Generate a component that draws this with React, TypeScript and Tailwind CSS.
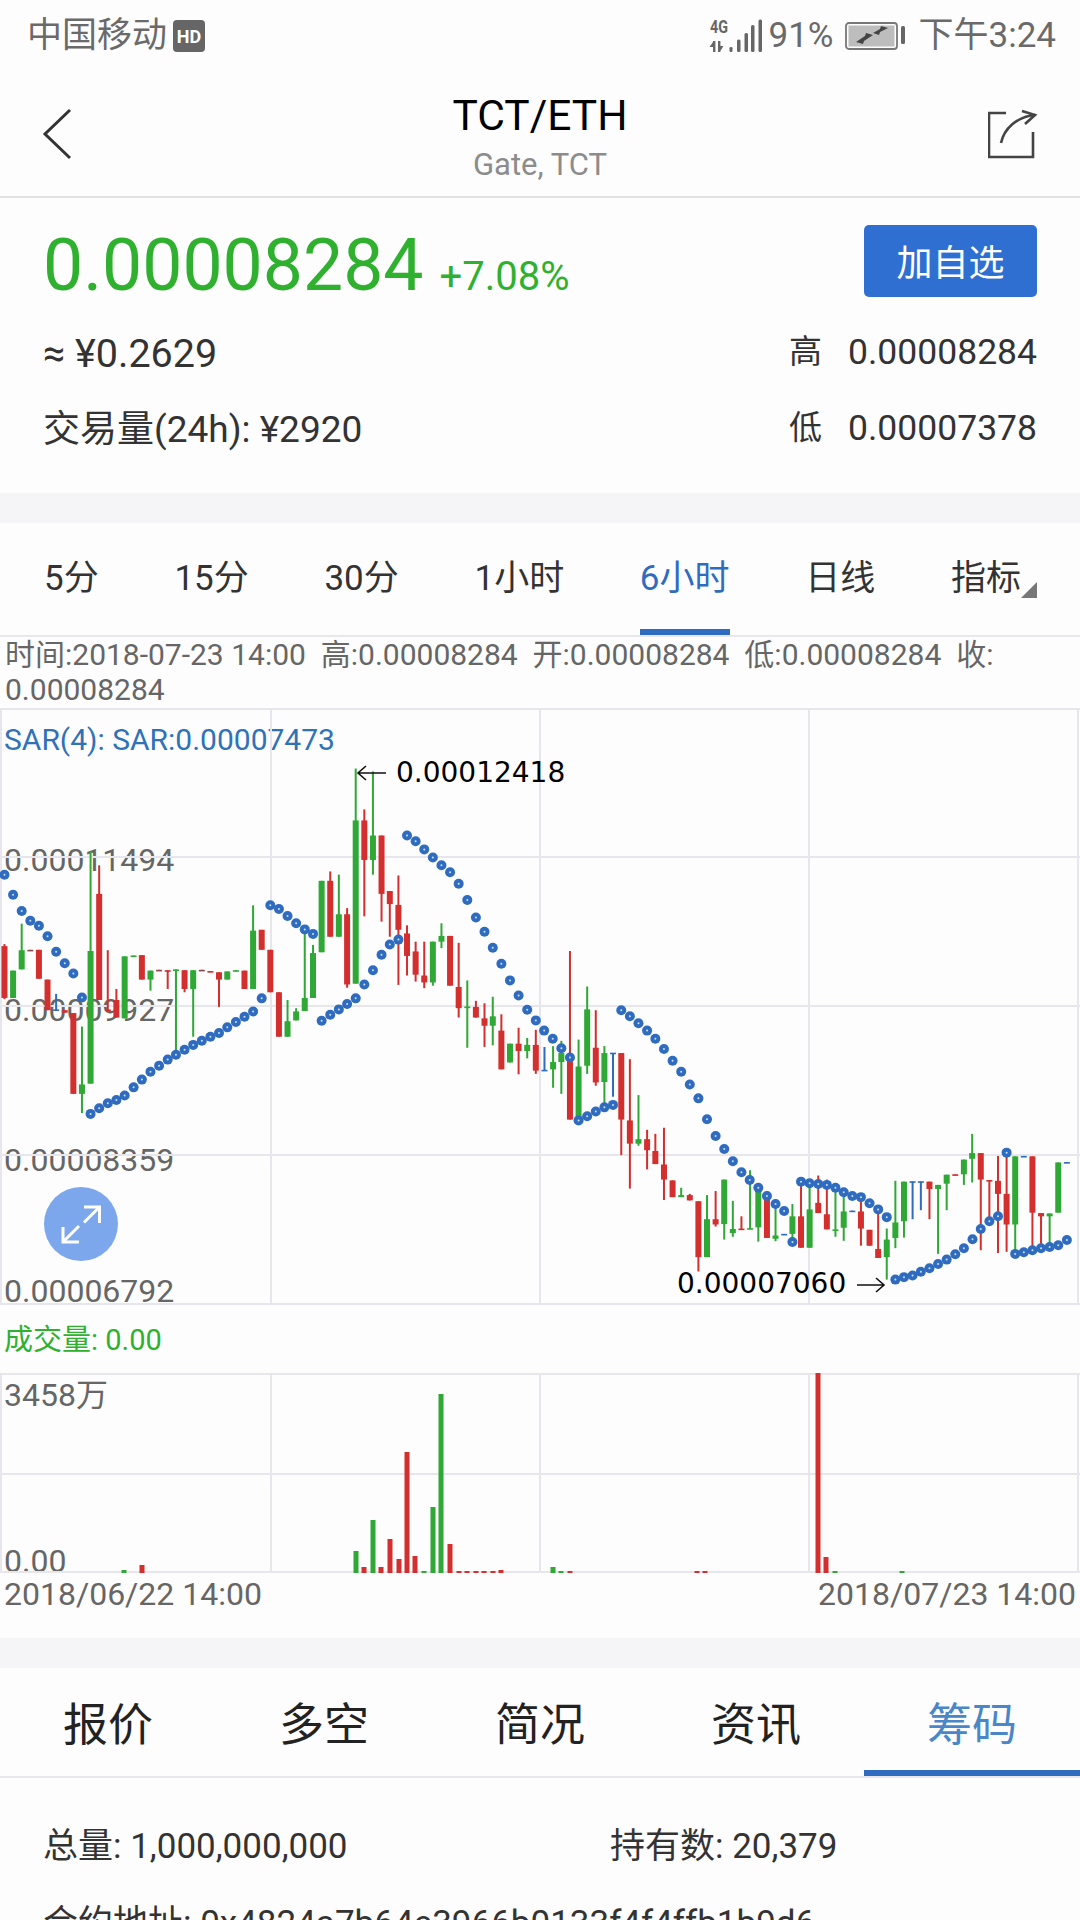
type Candle = [number, number, number, number, number, string];

const green = "#2fa836";
const red = "#d32f2f";
const blue = "#2f6cbf";
const grid = "#e6e6ec";

// [x, wick top, wick bottom, body top, body bottom, colour], read off the 2 halves of the chart
const left: Candle[] = [
  [13, 598, 733, 603, 730, "r"], [38, 663, 730, 663, 730, "g"], [63, 548, 660, 613, 660, "g"], [88, 612, 614, 612, 614, "d"],
  [113, 612, 683, 612, 683, "r"], [138, 685, 760, 685, 760, "r"], [163, 720, 760, 758, 760, "b"], [188, 760, 766, 760, 766, "r"],
  [213, 767, 965, 767, 965, "r"], [238, 800, 1012, 942, 965, "g"], [263, 370, 940, 615, 940, "g"], [288, 405, 735, 475, 735, "r"],
  [313, 613, 760, 758, 760, "r"], [338, 708, 778, 735, 778, "r"], [362, 628, 780, 628, 780, "g"], [388, 626, 628, 626, 628, "g"],
  [412, 625, 685, 625, 685, "r"], [437, 663, 712, 663, 685, "g"], [462, 661, 663, 661, 663, "d"], [487, 662, 708, 662, 664, "r"],
  [511, 660, 860, 660, 662, "g"], [536, 662, 716, 662, 708, "r"], [561, 662, 825, 662, 708, "g"], [586, 661, 663, 661, 663, "d"],
  [611, 664, 667, 664, 667, "r"], [636, 667, 752, 667, 685, "r"], [660, 665, 685, 665, 685, "g"], [685, 662, 664, 662, 664, "g"],
  [710, 663, 708, 663, 708, "r"], [735, 503, 708, 565, 708, "g"], [760, 563, 612, 563, 612, "r"], [785, 612, 716, 612, 716, "r"],
  [810, 716, 825, 716, 825, "r"], [835, 735, 825, 787, 825, "g"], [860, 755, 785, 763, 785, "g"], [885, 570, 762, 730, 762, "g"],
  [909, 600, 730, 620, 730, "g"], [934, 443, 618, 443, 618, "g"], [959, 420, 580, 443, 580, "r"], [984, 428, 580, 525, 580, "g"],
  [1008, 510, 705, 525, 697, "r"], [1033, 168, 695, 295, 695, "g"], [1058, 268, 530, 295, 392, "r"], [1083, 175, 428, 332, 392, "g"],
  [1108, 332, 543, 332, 475, "r"], [1132, 468, 580, 468, 500, "r"], [1157, 430, 698, 502, 563, "r"], [1182, 552, 675, 572, 627, "r"],
  [1207, 592, 690, 616, 673, "r"], [1232, 592, 706, 675, 692, "r"], [1257, 592, 700, 592, 692, "g"], [1282, 547, 608, 578, 592, "g"],
  [1307, 578, 700, 578, 700, "r"], [1332, 595, 778, 703, 755, "r"], [1357, 687, 852, 751, 754, "g"], [1382, 737, 778, 752, 778, "r"],
  [1407, 743, 850, 780, 798, "r"], [1431, 727, 846, 775, 798, "g"], [1456, 770, 905, 810, 905, "r"], [1481, 842, 888, 842, 888, "g"],
  [1506, 803, 917, 842, 860, "r"], [1531, 828, 878, 845, 860, "g"], [1556, 808, 916, 845, 908, "r"],
];

const right: Candle[] = [
  [13, 850, 908, 906, 908, "b"], [38, 848, 950, 887, 905, "g"], [62, 835, 965, 865, 887, "g"], [87, 615, 1028, 885, 1028, "r"],
  [112, 832, 1028, 898, 1028, "g"], [137, 702, 916, 758, 896, "g"], [162, 760, 945, 852, 937, "r"], [187, 848, 990, 865, 936, "g"],
  [212, 865, 972, 864, 866, "b"], [236, 865, 1115, 865, 1028, "r"], [261, 880, 1197, 1030, 1087, "r"], [286, 968, 1092, 1076, 1087, "g"],
  [311, 1053, 1150, 1076, 1103, "r"], [335, 1063, 1137, 1105, 1137, "r"], [360, 1048, 1225, 1138, 1175, "r"], [385, 1177, 1218, 1177, 1218, "r"],
  [410, 1195, 1218, 1213, 1218, "g"], [435, 1210, 1226, 1213, 1226, "r"], [460, 1228, 1400, 1228, 1365, "r"], [485, 1213, 1365, 1272, 1365, "g"],
  [510, 1203, 1290, 1272, 1285, "r"], [535, 1175, 1322, 1175, 1284, "g"], [560, 1227, 1315, 1296, 1306, "g"], [585, 1265, 1297, 1295, 1297, "r"],
  [610, 1152, 1296, 1294, 1296, "g"], [634, 1190, 1327, 1190, 1292, "g"], [659, 1205, 1318, 1205, 1318, "r"], [684, 1240, 1326, 1312, 1320, "g"],
  [709, 1308, 1310, 1308, 1310, "b"], [733, 1235, 1320, 1265, 1308, "g"], [758, 1180, 1342, 1265, 1342, "r"], [783, 1185, 1342, 1248, 1342, "g"],
  [808, 1165, 1257, 1232, 1257, "r"], [833, 1175, 1297, 1260, 1297, "r"], [858, 1185, 1315, 1297, 1299, "g"], [882, 1210, 1325, 1253, 1293, "g"],
  [907, 1251, 1253, 1251, 1253, "b"], [932, 1225, 1337, 1253, 1295, "r"], [957, 1298, 1337, 1298, 1337, "r"], [982, 1250, 1367, 1345, 1367, "r"],
  [1007, 1295, 1420, 1322, 1365, "g"], [1032, 1178, 1343, 1280, 1318, "g"], [1057, 1180, 1317, 1180, 1277, "g"], [1082, 1180, 1272, 1179, 1181, "b"],
  [1106, 1180, 1250, 1179, 1181, "b"], [1131, 1180, 1272, 1180, 1198, "r"], [1156, 1188, 1357, 1188, 1198, "g"], [1181, 1163, 1250, 1163, 1185, "g"],
  [1206, 1162, 1164, 1162, 1164, "r"], [1231, 1126, 1188, 1126, 1162, "g"], [1255, 1063, 1182, 1110, 1124, "g"], [1280, 1110, 1348, 1110, 1175, "r"],
  [1305, 1177, 1270, 1176, 1178, "r"], [1330, 1117, 1355, 1178, 1210, "r"], [1355, 1100, 1352, 1210, 1285, "r"], [1380, 1118, 1350, 1118, 1285, "g"],
  [1405, 1117, 1119, 1117, 1119, "b"], [1430, 1118, 1340, 1118, 1256, "r"], [1455, 1258, 1335, 1257, 1265, "r"], [1480, 1258, 1335, 1258, 1265, "g"],
  [1505, 1133, 1256, 1133, 1256, "g"], [1530, 1132, 1134, 1132, 1134, "b"],
];

const leftDots = [
  [13, 428], [38, 477], [63, 517], [88, 541], [113, 553], [138, 579], [163, 617], [188, 645], [213, 670], [238, 729],
  [263, 1014], [288, 1000], [313, 988], [338, 980], [362, 969], [388, 949], [412, 930], [437, 911], [462, 896], [487, 881],
  [511, 869], [536, 857], [561, 845], [586, 835], [611, 825], [636, 816], [660, 802], [685, 789], [710, 776], [735, 763], [760, 731],
  [785, 503], [810, 512], [835, 529], [860, 547], [885, 562], [909, 573],
  [934, 786], [959, 771], [984, 758], [1008, 745], [1033, 731], [1058, 697], [1083, 662], [1108, 624], [1132, 599], [1157, 587],
  [1182, 332], [1207, 346], [1232, 366], [1257, 386], [1282, 405], [1307, 422], [1332, 450], [1357, 490], [1382, 533], [1407, 568],
  [1431, 607], [1456, 646], [1481, 687], [1506, 724], [1531, 759], [1556, 785],
];

const rightDots = [
  [12, 810], [37, 830], [62, 853], [87, 876],
  [112, 1030], [137, 1020], [162, 1008], [187, 998], [212, 992],
  [236, 760], [261, 775], [286, 792], [311, 810], [335, 830], [360, 855], [385, 884], [410, 911], [435, 942], [460, 976],
  [485, 1027], [510, 1068], [535, 1100], [560, 1130], [585, 1157], [609, 1176], [634, 1195], [659, 1215], [684, 1235], [709, 1252], [733, 1328],
  [758, 1180], [783, 1184], [808, 1186], [833, 1188], [858, 1195], [882, 1206], [907, 1215], [932, 1218], [957, 1233], [982, 1248], [1007, 1267],
  [1032, 1420], [1057, 1414], [1082, 1410], [1106, 1401], [1131, 1392], [1156, 1382], [1181, 1371], [1206, 1358], [1231, 1343], [1256, 1321],
  [1280, 1296], [1305, 1277], [1330, 1265], [1355, 1109],
  [1380, 1357], [1405, 1353], [1430, 1348], [1455, 1343], [1480, 1340], [1505, 1336], [1530, 1323],
];

// x in page pixels, top of bar inside the 200px high chart
const volumes: [number, number, string][] = [
  [124, 197, "g"], [142, 192, "r"], [356, 178, "g"], [364, 194, "r"], [373, 147, "g"], [381, 194, "r"], [390, 166, "r"], [399, 186, "r"],
  [407, 79, "r"], [415, 183, "r"], [424, 198, "g"], [433, 134, "g"], [441, 21, "g"], [450, 171, "r"], [459, 198, "r"], [467, 198, "r"],
  [476, 198, "r"], [484, 198, "r"], [493, 198, "r"], [501, 197, "r"], [553, 194, "g"], [561, 198, "g"], [570, 198, "r"], [697, 198, "r"],
  [705, 198, "r"], [818, 0, "r"], [826, 184, "r"], [835, 198, "g"], [902, 198, "g"],
];

const colour = (c: string) => (c === "g" ? green : c === "r" ? red : c === "b" ? blue : "#8a4a4a");

function Candles({ data, base }: { data: Candle[]; base: number }) {
  return (
    <>
      {data.map(([zx, wt, wb, bt, bb, c]) => {
        const x = base + zx / 2.904;
        const y = (v: number) => 700 + v / 2.45 - 708;
        return (
          <g key={zx} fill={colour(c)}>
            <rect x={x - 1} y={y(wt)} width={2} height={y(wb) - y(wt)} />
            <rect x={x - 3} y={y(bt)} width={6} height={Math.max(y(bb) - y(bt), 1.6)} />
          </g>
        );
      })}
    </>
  );
}

function Dots({ data, base }: { data: number[][]; base: number }) {
  return (
    <>
      {data.map(([zx, zy]) => {
        const x = base + zx / 2.904;
        const y = 700 + zy / 2.45 - 708;
        return (
          <g key={zx}>
            <circle cx={x} cy={y} r={5} fill={blue} />
            <circle cx={x} cy={y} r={1} fill="#cfe0f5" />
          </g>
        );
      })}
    </>
  );
}

function Signal() {
  return (
    <svg width="56" height="36" viewBox="0 0 56 36" fill="#666">
      <text x="1" y="15" fontSize="18" fontWeight="700" fontFamily="Roboto, sans-serif" textLength="18" lengthAdjust="spacingAndGlyphs">4G</text>
      <path d="M4 23h2.4v11H4zM0.5 29L4 24v5zM9 23h2.4v11H9zM11.4 33l3-5h-3z" />
      <rect x="20.5" y="29" width="3" height="5" rx="1.2" />
      <rect x="28" y="21.5" width="3.5" height="12.5" rx="1.5" />
      <rect x="35.5" y="15" width="3.5" height="19" rx="1.5" />
      <rect x="42" y="7" width="3.5" height="27" rx="1.5" />
      <rect x="49.5" y="1.5" width="3.5" height="32.5" rx="1.5" />
    </svg>
  );
}

function Battery() {
  return (
    <svg width="60" height="28" viewBox="0 0 60 28">
      <rect x="1" y="1" width="51" height="26" rx="3" fill="none" stroke="#777" strokeWidth="1.8" />
      <rect x="3.5" y="3.5" width="46" height="21" fill="#bdbdbd" />
      <rect x="56" y="4" width="4" height="18" rx="1.5" fill="#666" />
      <path d="M11 20l9-6 1-3 7 2-9 6-1 3zM28 11l7-4 1-3 7 2-8 4-1 3z" fill="#444" />
    </svg>
  );
}

export default function App() {
  const tabs = ["5分", "15分", "30分", "1小时", "6小时", "日线"];
  const bottomTabs = ["报价", "多空", "简况", "资讯", "筹码"];

  return (
    <div className="h-[1920px] overflow-hidden bg-[#fdfdfd] font-[Roboto,'Noto_Sans_CJK_SC',sans-serif] text-[#333]">
      {/* Status bar */}
      <div className="flex h-[72px] items-center justify-between pl-[27px] pr-[24px] text-[35px] text-[#6a6a6a]">
        <div className="flex items-center gap-[6px]">
          <span>中国移动</span>
          <span className="flex h-[32px] w-[32px] items-center justify-center rounded-[4px] bg-[#666] text-[18px] font-bold text-white">HD</span>
        </div>
        <div className="flex items-center">
          <Signal />
          <span className="ml-[4px]">91%</span>
          <span className="ml-[11px]"><Battery /></span>
          <span className="ml-[14px]">下午3:24</span>
        </div>
      </div>

      {/* Title bar */}
      <div className="flex h-[126px] items-center justify-between border-b-2 border-[#e2e2e2] pl-[42px] pr-[42px]">
        <div className="w-[50px]">
          <svg width="30" height="52" viewBox="0 0 30 52" fill="none" stroke="#333" strokeWidth="3">
            <path d="M28 2L3 26l25 24" />
          </svg>
        </div>
        <div className="pt-[6px] text-center">
          <div className="text-[42.5px] leading-[50px] text-black">TCT/ETH</div>
          <div className="mt-[6px] text-[31px] leading-[36px] text-[#8c8c8c]">Gate, TCT</div>
        </div>
        <svg width="50" height="50" viewBox="0 0 50 50" fill="none" stroke="#444" strokeWidth="2.6">
          <path d="M18 4H1V48H45V23" />
          <path d="M13 34C16 20 28 8 47 6" />
          <path d="M34 2L47 6L37 15" />
        </svg>
      </div>

      {/* Price block */}
      <div className="flex h-[295px] justify-between pl-[43px] pr-[43px]">
        <div>
          <div className="mt-[28px] flex items-baseline gap-[16px] leading-[80px] text-[#2fb12f]">
            <span className="text-[71.5px]">0.00008284</span>
            <span className="text-[40px]">+7.08%</span>
          </div>
          <div className="mt-[12px] text-[39.5px] leading-[50px]">≈ ¥0.2629</div>
          <div className="mt-[26px] text-[37px] leading-[50px]">交易量(24h): ¥2920</div>
        </div>
        <div className="flex flex-col items-end">
          <button className="mt-[27px] flex h-[72px] w-[173px] items-center justify-center rounded-[5px] bg-[#2f6fd2] pt-[5px] text-[36px] text-white">加自选</button>
          <div className="mt-[30px] flex items-center gap-[26px] text-[35.5px] leading-[50px]">
            <span className="text-[33px]">高</span>
            <span>0.00008284</span>
          </div>
          <div className="mt-[26px] flex items-center gap-[26px] text-[35.5px] leading-[50px]">
            <span className="text-[33px]">低</span>
            <span>0.00007378</span>
          </div>
        </div>
      </div>

      <div className="h-[30px] bg-[#f5f5f7]" />

      {/* Interval tabs */}
      <div className="flex h-[114px] justify-between border-b-2 border-[#e8e8ec] pl-[44px] pr-[43px] text-[35px]">
        {tabs.map((t) => (
          <div
            key={t}
            className={t === "6小时" ? "flex items-center border-b-[6px] border-[#2f6cbf] pt-[6px] text-[#2f6cbf]" : "flex items-center"}
          >
            {t}
          </div>
        ))}
        <div className="flex items-center">
          <span>指标</span>
          <span className="mt-[22px] h-0 w-0 border-b-[16px] border-l-[16px] border-b-[#777] border-l-transparent" />
        </div>
      </div>

      {/* Crosshair values */}
      <div className="h-[71px] px-[5px] text-[30px] leading-[35px] text-[#666]">
        时间:2018-07-23 14:00&nbsp; 高:0.00008284&nbsp; 开:0.00008284&nbsp; 低:0.00008284&nbsp; 收: 0.00008284
      </div>

      {/* Candlestick chart */}
      <div className="relative h-[597px]">
        <div className="absolute left-[4px] top-[14px] text-[30px] leading-[36px] text-[#2f72b8]">SAR(4): SAR:0.00007473</div>
        <div className="absolute left-[4px] top-[133px] text-[32px] leading-[38px] text-[#666]">0.00011494</div>
        <div className="absolute left-[4px] top-[283px] text-[32px] leading-[38px] text-[#666]">0.00009927</div>
        <div className="absolute left-[4px] top-[433px] text-[32px] leading-[38px] text-[#666]">0.00008359</div>
        <div className="absolute left-[4px] top-[564px] text-[32px] leading-[38px] text-[#666]">0.00006792</div>
        <svg className="absolute inset-0" width="1080" height="597" viewBox="0 0 1080 597">
          <g fill="none" stroke={grid} strokeWidth="2">
            <path d="M0 1H1080M0 149H1080M0 298H1080M0 447H1080M0 596H1080" />
            <path d="M1 0V597M271 0V597M540 0V597M809 0V597M1078 0V597" />
          </g>
          <Candles data={left} base={0} />
          <Candles data={right} base={540} />
          <Dots data={leftDots} base={0} />
          <Dots data={rightDots} base={540} />
          <g fill="none" stroke="#111" strokeWidth="1.6">
            <path d="M358 65H386M366 58L358 65L366 72" />
            <path d="M857 577H884M876 570L884 577L876 584" />
          </g>
        </svg>
        <div className="absolute left-[396px] top-[47px] font-['DejaVu_Sans',sans-serif] text-[28px] leading-[36px] text-black">0.00012418</div>
        <div className="absolute left-[677px] top-[558px] font-['DejaVu_Sans',sans-serif] text-[28px] leading-[36px] text-black">0.00007060</div>
        <div className="absolute left-[44px] top-[479px] flex h-[74px] w-[74px] items-center justify-center rounded-full bg-[#7da7ec]">
          <svg width="40" height="40" viewBox="0 0 40 40" fill="none" stroke="#fff" strokeWidth="3">
            <path d="M23 3H38.5V19M38.5 3L23 18.5" />
            <path d="M2 23V38H18M2 38L18 22" />
          </svg>
        </div>
      </div>

      <div className="flex h-[68px] items-center px-[4px] pt-[4px] text-[29px] text-[#2fb12f]">成交量: 0.00</div>

      {/* Volume chart */}
      <div className="relative h-[200px]">
        <div className="absolute left-[4px] top-[4px] text-[32px] leading-[36px] text-[#666]">3458万</div>
        <div className="absolute bottom-[-6px] left-[4px] text-[32px] leading-[36px] text-[#666]">0.00</div>
        <svg className="absolute inset-0" width="1080" height="200" viewBox="0 0 1080 200">
          <g fill="none" stroke={grid} strokeWidth="2">
            <path d="M0 1H1080M0 101H1080M0 199H1080" />
            <path d="M1 0V200M271 0V200M540 0V200M809 0V200M1078 0V200" />
          </g>
          {volumes.map(([x, top, c]) => (
            <rect key={x} x={x - 2.5} y={top} width={5} height={200 - top} fill={colour(c)} />
          ))}
        </svg>
      </div>

      <div className="flex h-[65px] justify-between px-[4px] pt-[3px] text-[32px] leading-[36px] text-[#666]">
        <span>2018/06/22 14:00</span>
        <span>2018/07/23 14:00</span>
      </div>

      <div className="h-[30px] bg-[#f5f5f7]" />

      {/* Detail tabs */}
      <div className="grid h-[110px] grid-cols-5 border-b-2 border-[#e8e8ec] text-[45px] text-[#222]">
        {bottomTabs.map((t) => (
          <div
            key={t}
            className={t === "筹码" ? "flex items-center justify-center border-b-[6px] border-[#2f6cbf] pt-[14px] text-[#4a86c8]" : "flex items-center justify-center pt-[8px]"}
          >
            {t}
          </div>
        ))}
      </div>

      <div className="grid grid-cols-[567px_1fr] pl-[43px] pt-[46px] text-[35px] leading-[46px]">
        <span>总量: 1,000,000,000</span>
        <span>持有数: 20,379</span>
      </div>
      <div className="whitespace-nowrap pl-[43px] pt-[31px] text-[35px] leading-[46px]">合约地址: 0x4824a7b64e3966b0133f4f4ffb1b9d6</div>
    </div>
  );
}
